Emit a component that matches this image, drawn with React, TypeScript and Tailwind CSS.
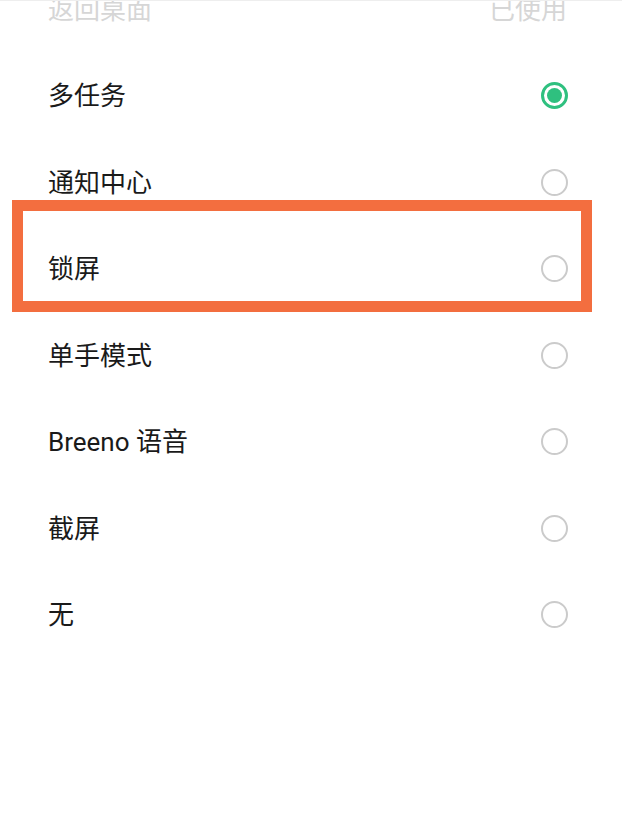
import React from "react";

const items = [
  { label: "多任务", selected: true },
  { label: "通知中心" },
  { label: "锁屏" },
  { label: "单手模式" },
  { label: "Breeno 语音" },
  { label: "截屏" },
  { label: "无" },
];

function Radio({ selected }: { selected?: boolean }) {
  if (selected) {
    return (
      <div className="w-[27px] h-[27px] rounded-full border-[3px] border-[#2fc07f] flex items-center justify-center">
        <div className="w-[15px] h-[15px] rounded-full bg-[#2fc07f]" />
      </div>
    );
  }
  return <div className="w-[27px] h-[27px] rounded-full border-2 border-[#cbcbcb]" />;
}

export default function App() {
  return (
    <div
      className="relative w-[622px] h-[819px] bg-white overflow-hidden border-t border-[#eeeeee]"
      style={{ fontFamily: 'Roboto, "Noto Sans CJK SC", sans-serif' }}
    >
      <div className="mt-[-35px] flex flex-col">
        <div className="h-[86.5px] flex items-center justify-between pl-[48px] pr-[55px] text-[26px] text-[#d6d6d6]">
          <span className="mt-[2px]">返回桌面</span>
          <span className="mt-[2px]">已使用</span>
        </div>
        {items.map((it) => (
          <div
            key={it.label}
            className="h-[86.5px] flex items-center justify-between pl-[48px] pr-[54px] text-[26px] text-[#1a1a1a]"
          >
            <span className="mt-[2px]">{it.label}</span>
            <Radio selected={it.selected} />
          </div>
        ))}
      </div>
      <div className="absolute left-[12px] top-[199px] w-[580px] h-[112px] border-[11px] border-[#f36e3f]" />
    </div>
  );
}
